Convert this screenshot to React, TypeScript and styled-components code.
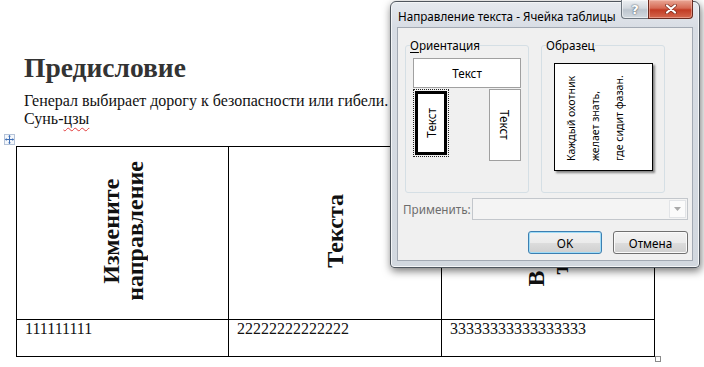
import React from 'react';
import styled, { createGlobalStyle } from 'styled-components';

const GlobalStyle = createGlobalStyle`
  html, body {
    margin: 0;
    padding: 0;
    background: #fff;
  }
  body {
    width: 704px;
    height: 367px;
    overflow: hidden;
  }
`;

const Page = styled.div`
  position: relative;
  width: 704px;
  height: 367px;
  box-sizing: border-box;
  padding: 52px 0 0 24px;
  font-family: "Liberation Serif", "Times New Roman", serif;
  color: #111;
`;

const Heading = styled.h1`
  margin: 0;
  font-size: 27.5px;
  line-height: 32px;
  font-weight: bold;
  color: #333;
`;

const Para = styled.p`
  margin: 8px 0 0;
  font-size: 16px;
  line-height: 18px;
  white-space: nowrap;
`;

const Misspelled = styled.span`
  text-decoration: underline wavy #e23b3b;
  text-decoration-thickness: 1px;
  text-underline-offset: 3px;
`;

const TableWrap = styled.div`
  position: relative;
  width: 639px;
  margin: 18px 0 0 -8px;
`;

const MoveHandle = styled.div`
  position: absolute;
  left: -12px;
  top: -12px;
  width: 11px;
  height: 11px;
  box-sizing: border-box;
  border: 1px solid #b5c3d8;
  background: #f4f7fb;
  display: flex;
  align-items: center;
  justify-content: center;
`;

const ResizeHandle = styled.div`
  position: absolute;
  right: -6px;
  bottom: -5px;
  width: 6px;
  height: 6px;
  box-sizing: border-box;
  border: 1px solid #8a8a8a;
  background: #fff;
`;

const DocTable = styled.table`
  border-collapse: separate;
  border-spacing: 0;
  table-layout: fixed;
  width: 639px;
  border-left: 1px solid #000;
  border-top: 1px solid #000;
`;

const HeadCell = styled.td<{ $w: number }>`
  width: ${p => p.$w}px;
  height: 173px;
  box-sizing: border-box;
  padding: 0 8px;
  border-right: 1px solid #000;
  border-bottom: 1px solid #000;
  vertical-align: middle;
  text-align: center;
`;

const BodyCell = styled.td<{ $w: number }>`
  width: ${p => p.$w}px;
  height: 37px;
  box-sizing: border-box;
  padding: 0 8px;
  border-right: 1px solid #000;
  border-bottom: 1px solid #000;
  vertical-align: top;
  font-size: 16px;
  line-height: 18px;
`;

const UpText = styled.div`
  display: inline-block;
  writing-mode: vertical-rl;
  transform: rotate(180deg);
  text-align: center;
  font-size: 24px;
  line-height: 24px;
  font-weight: bold;
  white-space: nowrap;
`;

/* dialog window */

const Dialog = styled.div`
  position: absolute;
  left: 390px;
  top: 1px;
  width: 310px;
  height: 267px;
  box-sizing: border-box;
  display: flex;
  flex-direction: column;
  padding: 0 6px 6px 6px;
  border: 1px solid #4f565e;
  border-radius: 6px 6px 4px 4px;
  background: linear-gradient(#e6eaef, #d8dde4 26px, #d2d8df);
  box-shadow: 1px 3px 8px rgba(0, 0, 0, 0.55), inset 0 0 0 1px #f3f5f7;
  font-family: "Noto Sans", "Open Sans", sans-serif;
  font-size: 11.7px;
  color: #000;
`;

const TitleBar = styled.div`
  height: 25px;
  display: flex;
  align-items: flex-start;
`;

const Title = styled.div`
  flex: 1;
  padding: 6px 0 0 1px;
  line-height: 16px;
  white-space: nowrap;
`;

const HelpButton = styled.div`
  width: 27px;
  height: 19px;
  margin-top: -2px;
  box-sizing: border-box;
  border: 1px solid #6d767f;
  border-top: none;
  border-right: none;
  border-radius: 0 0 0 4px;
  background: linear-gradient(#eef1f4, #d3d9df 45%, #bcc5ce 55%, #d2d9e0);
  box-shadow: inset 0 0 0 1px rgba(255, 255, 255, 0.5);
  display: flex;
  align-items: center;
  justify-content: center;
  font-family: "DejaVu Sans", sans-serif;
  font-weight: bold;
  font-size: 13px;
  color: #fff;
  text-shadow: 0 0 1px #56606a, 0 0 2px #56606a;
`;

const CloseButton = styled.div`
  width: 45px;
  height: 19px;
  margin-top: -2px;
  box-sizing: border-box;
  border: 1px solid #6b2a1f;
  border-top: none;
  border-radius: 0 0 4px 0;
  background: linear-gradient(#e9a796, #d66a54 45%, #c23b24 55%, #d4684e);
  box-shadow: inset 0 0 0 1px rgba(255, 210, 200, 0.45);
  display: flex;
  align-items: center;
  justify-content: center;
`;

const Client = styled.div`
  flex: 1;
  box-sizing: border-box;
  display: flex;
  flex-direction: column;
  padding: 10px 4px 0 5px;
  border: 1px solid #a2a9b3;
  background: #f0f0f0;
`;

const GroupsRow = styled.div`
  display: flex;
  gap: 12px;
  margin-left: 2px;
`;

const Group = styled.fieldset`
  margin: 0;
  padding: 0 7px;
  width: 124px;
  height: 155px;
  box-sizing: border-box;
  border: 1px solid #d5dfe5;
  border-radius: 3px;
  display: flex;
  flex-direction: column;
`;

const Legend = styled.legend`
  margin-left: -3px;
  padding: 0;
  line-height: 14px;
`;

const Mnemonic = styled.span`
  text-decoration: underline;
  text-underline-offset: 2px;
`;

const HorizontalChoice = styled.div`
  margin-top: 6px;
  height: 30px;
  box-sizing: border-box;
  border: 1px solid #a0a0a0;
  background: #fff;
  display: flex;
  align-items: center;
  justify-content: center;
`;

const VerticalRow = styled.div`
  display: flex;
  justify-content: space-between;
  align-items: flex-start;
  margin-top: 1px;
`;

const VerticalChoice = styled.div<{ $selected?: boolean; $h: number }>`
  width: 32px;
  height: ${p => p.$h}px;
  box-sizing: border-box;
  background: #fff;
  display: flex;
  align-items: center;
  justify-content: center;
  border: ${p => (p.$selected ? '3px solid #000' : '1px solid #a0a0a0')};
  outline: ${p => (p.$selected ? '1px dotted #222' : 'none')};
  outline-offset: ${p => (p.$selected ? '1px' : '0')};
  margin-left: ${p => (p.$selected ? '2px' : '0')};
  margin-top: ${p => (p.$selected ? '2px' : '0')};
`;

const ChoiceUp = styled.span`
  writing-mode: vertical-rl;
  transform: rotate(180deg);
  line-height: 16px;
`;

const ChoiceDown = styled.span`
  writing-mode: vertical-rl;
  line-height: 16px;
`;

const SampleBox = styled.div`
  margin: 11px auto 0;
  width: 99px;
  height: 108px;
  box-sizing: border-box;
  border: 1px solid #000;
  background: #fff;
  box-shadow: 2px 2px 2px rgba(0, 0, 0, 0.45);
  display: flex;
  padding: 6px 0 9px 4px;
`;

const SampleText = styled.div`
  writing-mode: vertical-rl;
  transform: rotate(180deg);
  font-size: 10.6px;
  line-height: 24px;
  white-space: nowrap;
`;

const ApplyRow = styled.div`
  display: flex;
  align-items: center;
  margin-top: 5px;
`;

const ApplyLabel = styled.div`
  width: 69px;
  color: #6d6d6d;
`;

const Combo = styled.div`
  width: 217px;
  height: 22px;
  box-sizing: border-box;
  border: 1px solid #c3c7cc;
  background: #f4f4f4;
  display: flex;
  justify-content: flex-end;
  padding: 1px;
`;

const ComboArrow = styled.div`
  width: 17px;
  box-sizing: border-box;
  border: 1px solid #e2e4e7;
  background: #fbfbfb;
  display: flex;
  align-items: center;
  justify-content: center;
`;

const ButtonsRow = styled.div`
  display: flex;
  justify-content: flex-end;
  gap: 11px;
  margin-top: 11px;
`;

const Btn = styled.button<{ $default?: boolean; $w: number }>`
  width: ${p => p.$w}px;
  height: 23px;
  box-sizing: border-box;
  padding: 0;
  font: inherit;
  color: #000;
  border: 1px solid ${p => (p.$default ? '#3c7fb1' : '#707070')};
  border-radius: 3px;
  background: linear-gradient(#f2f2f2 0%, #ebebeb 50%, #dddddd 51%, #cfcfcf 100%);
  box-shadow: inset 0 0 0 1px ${p => (p.$default ? '#9fdcf7' : '#fafafa')};
`;

const MoveIcon = () => (
  <svg width="9" height="9" viewBox="0 0 9 9">
    <path d="M4.5 0.5V8.5M0.5 4.5H8.5" stroke="#3f6fb6" strokeWidth="1" />
    <path d="M4.5 0L3 1.6H6Z M4.5 9L3 7.4H6Z M0 4.5L1.6 3V6Z M9 4.5L7.4 3V6Z" fill="#3f6fb6" />
  </svg>
);

const CloseIcon = () => (
  <svg width="12" height="10" viewBox="0 0 12 10">
    <path d="M2 1.5L10 8.5M10 1.5L2 8.5" stroke="#7a2a1c" strokeWidth="3.6" strokeLinecap="round" />
    <path d="M2 1.5L10 8.5M10 1.5L2 8.5" stroke="#fff" strokeWidth="2.2" strokeLinecap="round" />
  </svg>
);

const App: React.FC = () => {
  return (
    <Page>
      <GlobalStyle />
      <Heading>Предисловие</Heading>
      <Para>
        Генерал выбирает дорогу к безопасности или гибели.
        <br />
        Сунь-<Misspelled>цзы</Misspelled>
      </Para>
      <TableWrap>
        <MoveHandle>
          <MoveIcon />
        </MoveHandle>
        <DocTable>
          <tbody>
            <tr>
              <HeadCell $w={212}>
                <UpText>
                  Измените
                  <br />
                  направление
                </UpText>
              </HeadCell>
              <HeadCell $w={213}>
                <UpText>Текста</UpText>
              </HeadCell>
              <HeadCell $w={213}>
                <UpText>
                  В колонке
                  <br />
                  таблице
                </UpText>
              </HeadCell>
            </tr>
            <tr>
              <BodyCell $w={212}>111111111</BodyCell>
              <BodyCell $w={213}>22222222222222</BodyCell>
              <BodyCell $w={213}>33333333333333333</BodyCell>
            </tr>
          </tbody>
        </DocTable>
        <ResizeHandle />
      </TableWrap>

      <Dialog>
        <TitleBar>
          <Title>Направление текста - Ячейка таблицы</Title>
          <HelpButton>?</HelpButton>
          <CloseButton>
            <CloseIcon />
          </CloseButton>
        </TitleBar>
        <Client>
          <GroupsRow>
            <Group>
              <Legend>
                <Mnemonic>О</Mnemonic>риентация
              </Legend>
              <HorizontalChoice>Текст</HorizontalChoice>
              <VerticalRow>
                <VerticalChoice $selected $h={64}>
                  <ChoiceUp>Текст</ChoiceUp>
                </VerticalChoice>
                <VerticalChoice $h={72}>
                  <ChoiceDown>Текст</ChoiceDown>
                </VerticalChoice>
              </VerticalRow>
            </Group>
            <Group>
              <Legend>Образец</Legend>
              <SampleBox>
                <SampleText>
                  Каждый охотник
                  <br />
                  желает знать,
                  <br />
                  где сидит фазан.
                </SampleText>
              </SampleBox>
            </Group>
          </GroupsRow>
          <ApplyRow>
            <ApplyLabel>Применить:</ApplyLabel>
            <Combo>
              <ComboArrow>
                <svg width="7" height="4" viewBox="0 0 7 4">
                  <path d="M0 0H7L3.5 4Z" fill="#a9a9a9" />
                </svg>
              </ComboArrow>
            </Combo>
          </ApplyRow>
          <ButtonsRow>
            <Btn $default $w={74}>OK</Btn>
            <Btn $w={75}>Отмена</Btn>
          </ButtonsRow>
        </Client>
      </Dialog>
    </Page>
  );
};

export default App;
